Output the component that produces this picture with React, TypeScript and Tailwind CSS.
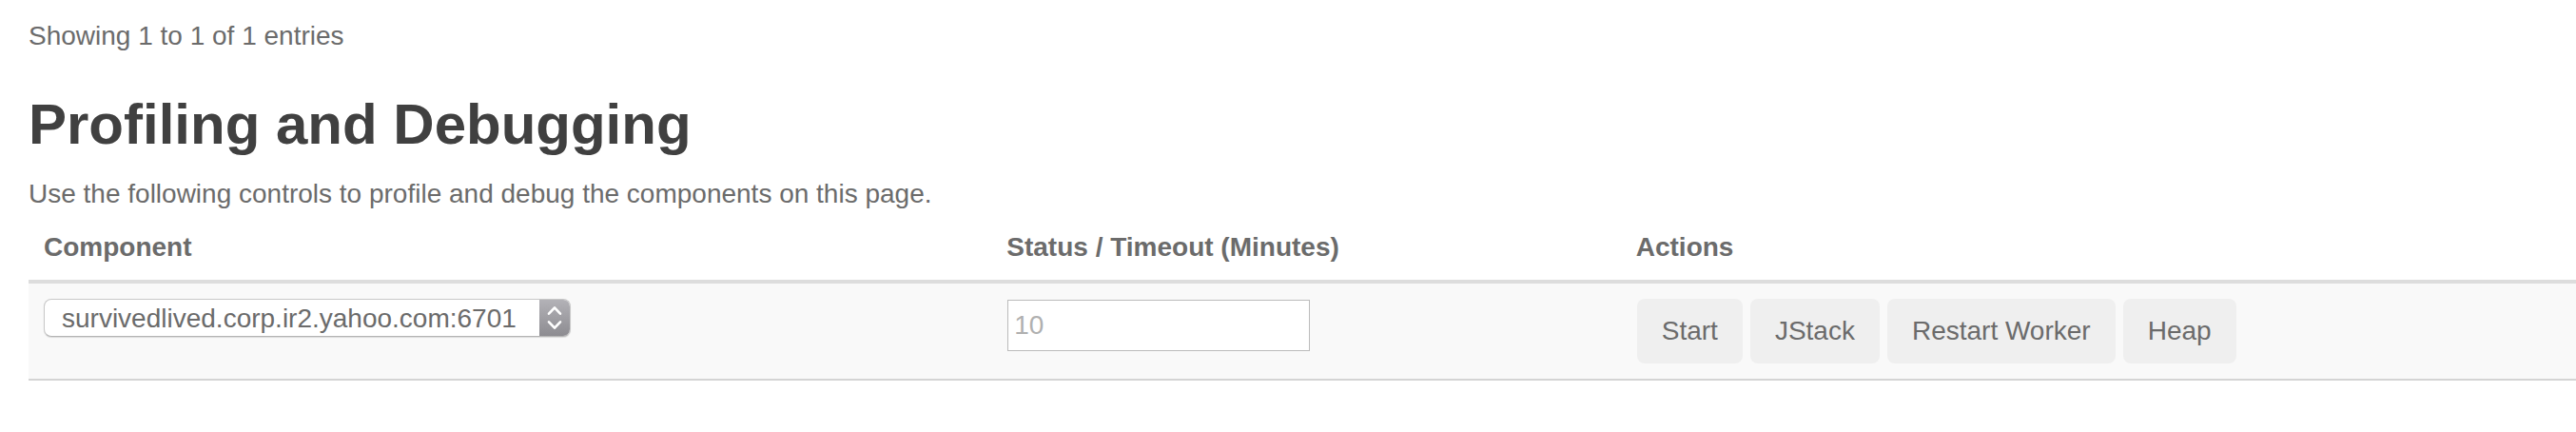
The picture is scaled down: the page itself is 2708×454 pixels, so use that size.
const actions = ["Start", "JStack", "Restart Worker", "Heap"];

function ComponentSelect() {
  return (
    <div className="relative flex h-10 w-[554px] overflow-hidden rounded-lg border border-[#c8c8c8] border-b-[#b4b4b4] bg-white shadow-[0_1px_1px_rgba(0,0,0,0.12)]">
      <select
        aria-label="Component"
        className="w-full appearance-none bg-transparent pt-0.5 pr-10 pl-[18px] text-[28px] leading-9 text-[#6b6b6b] outline-none"
      >
        <option>survivedlived.corp.ir2.yahoo.com:6701</option>
      </select>
      <span className="pointer-events-none absolute inset-y-0 right-0 flex w-8 items-center justify-center bg-linear-to-b from-[#b3b2b7] to-[#8d8c91]">
        <svg width="16" height="26" viewBox="0 0 16 26" fill="none" stroke="#fff" strokeWidth="2.6" strokeLinecap="round" strokeLinejoin="round" aria-hidden="true">
          <path d="M2 8.7 8 2.3l6 6.4M2 17.3l6 6.4 6-6.4" />
        </svg>
      </span>
    </div>
  );
}

export default function App() {
  return (
    <main className="bg-white pt-[18px] pb-[54px] pl-[30px] font-['Liberation_Sans',Arial,sans-serif] text-[28px] leading-10 text-[#6b6b6b]">
      <p>Showing 1 to 1 of 1 entries</p>
      <h2 className="mt-10 mb-5 text-[60px] leading-[66px] font-bold text-[#404040]">
        Profiling and Debugging
      </h2>
      <p>Use the following controls to profile and debug the components on this page.</p>
      <table className="w-full table-fixed border-separate border-spacing-0 text-left">
        <thead>
          <tr>
            <th className="w-[37.8%] border-b-4 border-[#ddd] px-4 pt-4 pb-3.5 font-bold">Component</th>
            <th className="w-[24.7%] border-b-4 border-[#ddd] px-4 pt-4 pb-3.5 font-bold">Status / Timeout (Minutes)</th>
            <th className="border-b-4 border-[#ddd] px-4 pt-4 pb-3.5 font-bold">Actions</th>
          </tr>
        </thead>
        <tbody>
          <tr className="bg-[#f9f9f9] align-top">
            <td className="border-b-2 border-[#d4d4d4] p-4">
              <ComponentSelect />
            </td>
            <td className="border-b-2 border-[#d4d4d4] p-4">
              <input
                type="text"
                aria-label="Timeout (Minutes)"
                placeholder="10"
                className="m-px block h-[54px] w-[318px] border border-[#bbb] bg-white px-1.5 text-[28px] leading-10 outline-none placeholder:text-[#b0b0b0]"
              />
            </td>
            <td className="border-b-2 border-[#d4d4d4] p-4">
              <div className="mx-px flex gap-2">
                {actions.map((label) => (
                  <button key={label} type="button" className="h-[68px] rounded-lg bg-[#efefef] px-[26px]">
                    {label}
                  </button>
                ))}
              </div>
            </td>
          </tr>
        </tbody>
      </table>
    </main>
  );
}
